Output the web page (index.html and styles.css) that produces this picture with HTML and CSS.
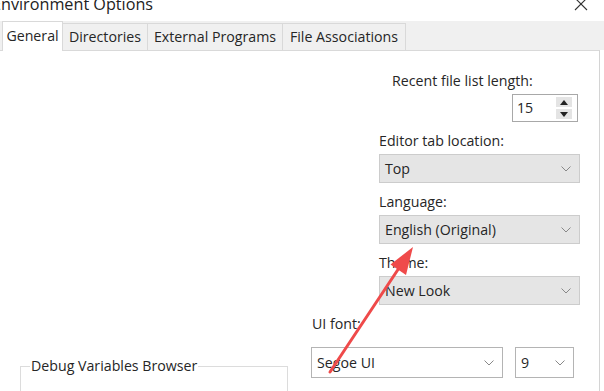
FILE: index.html
```html
<!DOCTYPE html>
<html>
<head>
<meta charset="utf-8">
<link rel="stylesheet" href="styles.css">
</head>
<body>
<div class="window">
  <div class="titlebar">
    <span class="title">Environment Options</span>
    <svg class="close" width="14" height="14" viewBox="0 0 14 14"><path d="M1 1 L13 13 M13 1 L1 13" stroke="#333" stroke-width="1.1" fill="none"/></svg>
  </div>
  <div class="tabs">
    <div class="tab active t-general">General</div>
    <div class="tab t-dirs">Directories</div>
    <div class="tab t-ext">External Programs</div>
    <div class="tab t-file">File Associations</div>
  </div>
  <div class="page">
    <div class="right-col">
      <div class="recent">
        <div class="label recent-label">Recent file list length:</div>
        <div class="spinner">
          <span class="spin-value">15</span>
          <div class="spin-btns">
            <span class="spin-btn"><svg width="8" height="5" viewBox="0 0 8 5"><path d="M0 5 L4 0 L8 5 Z" fill="#222"/></svg></span>
            <span class="spin-btn"><svg width="8" height="5" viewBox="0 0 8 5"><path d="M0 0 L8 0 L4 5 Z" fill="#222"/></svg></span>
          </div>
        </div>
      </div>
      <div class="field">
        <div class="label">Editor tab location:</div>
        <div class="select gray"><span>Top</span><svg class="chev" width="10" height="6" viewBox="0 0 10 6"><path d="M0.5 0.5 L5 5 L9.5 0.5" stroke="#888" fill="none"/></svg></div>
      </div>
      <div class="field">
        <div class="label">Language:</div>
        <div class="select gray"><span>English (Original)</span><svg class="chev" width="10" height="6" viewBox="0 0 10 6"><path d="M0.5 0.5 L5 5 L9.5 0.5" stroke="#888" fill="none"/></svg></div>
      </div>
      <div class="field">
        <div class="label">Theme:</div>
        <div class="select gray"><span>New Look</span><svg class="chev" width="10" height="6" viewBox="0 0 10 6"><path d="M0.5 0.5 L5 5 L9.5 0.5" stroke="#888" fill="none"/></svg></div>
      </div>
    </div>
    <div class="bottom">
      <fieldset class="group"><legend>Debug Variables Browser</legend></fieldset>
      <div class="uifont">
        <div class="label">UI font:</div>
        <div class="font-row">
          <div class="select white font-name"><span>Segoe UI</span><svg class="chev" width="10" height="6" viewBox="0 0 10 6"><path d="M0.5 0.5 L5 5 L9.5 0.5" stroke="#888" fill="none"/></svg></div>
          <div class="select white font-size"><span>9</span><svg class="chev" width="10" height="6" viewBox="0 0 10 6"><path d="M0.5 0.5 L5 5 L9.5 0.5" stroke="#888" fill="none"/></svg></div>
        </div>
      </div>
    </div>
  </div>
  <svg class="annotation" width="604" height="391" viewBox="0 0 604 391">
    <line x1="330" y1="372" x2="401" y2="265" stroke="#ef4a4a" stroke-width="3" stroke-linecap="round"/>
    <path d="M413 247 L406 275 L390.5 264.5 Z" fill="#ef4a4a"/>
  </svg>
</div>
</body>
</html>
```

FILE: styles.css
```css
html, body {
  margin: 0;
  padding: 0;
}
body {
  width: 604px;
  height: 391px;
  overflow: hidden;
  background: #ffffff;
  font-family: "Open Sans", "Noto Sans", sans-serif;
  font-size: 14.2px;
  color: #262626;
}
.window {
  position: relative;
  height: 391px;
  display: flex;
  flex-direction: column;
  overflow: hidden;
}
.titlebar {
  height: 21px;
  display: flex;
  justify-content: space-between;
  align-items: flex-start;
  flex: none;
}
.title {
  font-size: 16.2px;
  line-height: 16px;
  margin-top: -4px;
  margin-left: -8px;
  color: #222222;
  white-space: nowrap;
}
.close {
  margin-top: -3px;
  margin-right: 16px;
}
.tabs {
  height: 29px;
  flex: none;
  background: #f0f0f0;
  display: flex;
  align-items: flex-end;
  padding-left: 2px;
}
.tab {
  height: 27px;
  box-sizing: border-box;
  border: 1px solid #d9d9d9;
  border-bottom: none;
  margin-right: -1px;
  background: #f0f0f0;
  text-align: center;
  line-height: 26px;
  white-space: nowrap;
}
.tab.active {
  height: 30px;
  margin-bottom: -1px;
  background: #ffffff;
  position: relative;
  z-index: 1;
  line-height: 28px;
}
.t-general { width: 61px; }
.t-dirs { width: 86px; }
.t-ext { width: 136px; }
.t-file { width: 124px; }
.page {
  flex: 1;
  min-height: 0;
  overflow: hidden;
  background: #ffffff;
  border-top: 1px solid #d9d9d9;
  border-right: 1px solid #d4d4d4;
  margin-right: 4px;
  padding-top: 21px;
  display: flex;
  flex-direction: column;
}
.right-col {
  margin-left: 379px;
  width: 201px;
  display: flex;
  flex-direction: column;
}
.label {
  line-height: 18px;
  height: 18px;
  white-space: nowrap;
}
.recent {
  display: flex;
  flex-direction: column;
}
.recent-label {
  padding-left: 13px;
  margin-bottom: 4px;
}
.spinner {
  align-self: flex-end;
  margin-right: 2px;
  width: 66px;
  height: 28px;
  box-sizing: border-box;
  border: 1px solid #a8a8a8;
  background: #fff;
  display: flex;
  align-items: center;
  justify-content: space-between;
  padding: 0 5px 0 4px;
}
.spin-value {
  line-height: 18px;
}
.spin-btns {
  display: flex;
  flex-direction: column;
  gap: 2px;
}
.spin-btn {
  width: 16px;
  height: 10px;
  background: #e4e4e4;
  display: flex;
  align-items: center;
  justify-content: center;
}
.field {
  margin-top: 10px;
  display: flex;
  flex-direction: column;
}
.field .label {
  margin-bottom: 4px;
}
.select {
  height: 29px;
  box-sizing: border-box;
  display: flex;
  align-items: center;
  justify-content: space-between;
  padding: 0 8px 0 5px;
  white-space: nowrap;
}
.select.gray {
  background: #e5e5e5;
  border: 1px solid #cccccc;
}
.select.white {
  background: #ffffff;
  border: 1px solid #b4b4b4;
  height: 31px;
}
.bottom {
  margin-top: 10px;
  display: flex;
  align-items: flex-start;
}
.group {
  margin: 42px 0 0 20px;
  width: 268px;
  height: 50px;
  box-sizing: border-box;
  border: 1px solid #dcdcdc;
  border-bottom: none;
  padding: 0 9px;
}
.group legend {
  padding: 0 1px;
  line-height: 18px;
}
.uifont {
  margin-left: 23px;
  display: flex;
  flex-direction: column;
}
.uifont .label {
  padding-left: 1px;
}
.font-row {
  margin-top: 14px;
  display: flex;
  gap: 12px;
}
.font-name { width: 192px; }
.font-size { width: 59px; }
.annotation {
  position: absolute;
  left: 0;
  top: 0;
  pointer-events: none;
}
```
